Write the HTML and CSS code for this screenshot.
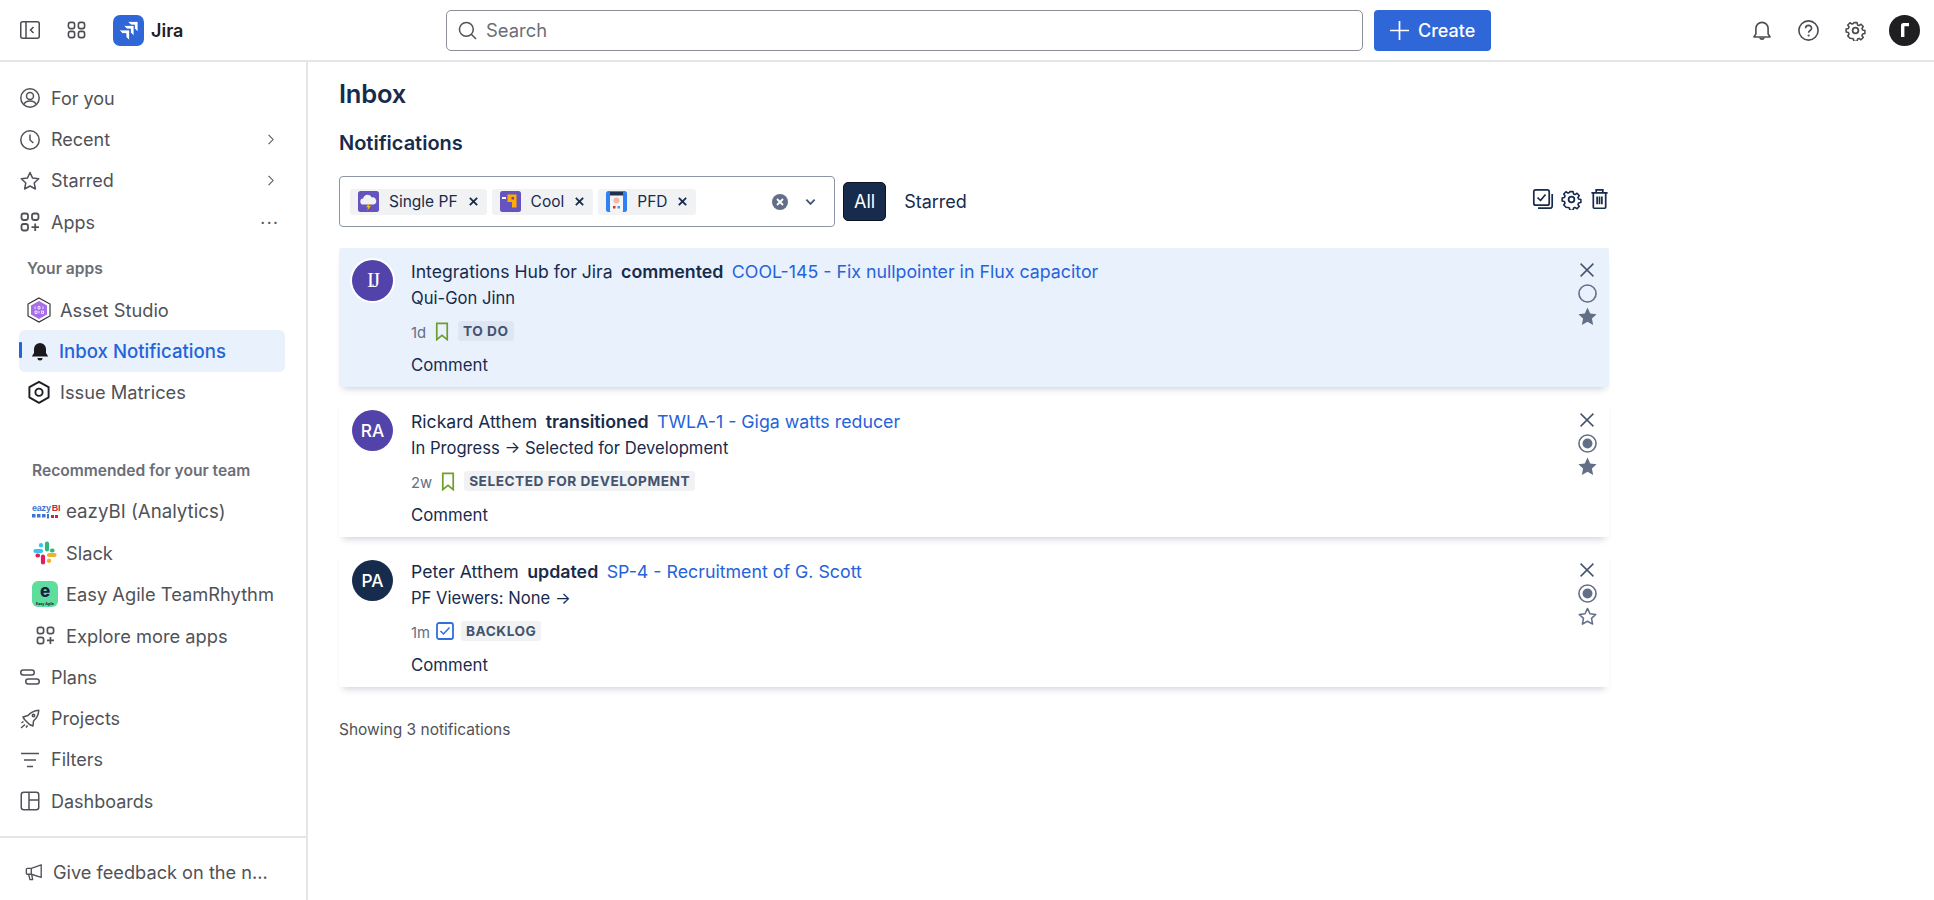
FILE: index.html
```html
<!DOCTYPE html>
<html lang="en">
<head>
<meta charset="utf-8">
<title>Jira Inbox</title>
<link rel="stylesheet" href="styles.css">
</head>
<body>
<svg class="defs" width="0" height="0" aria-hidden="true">
  <defs>
    <symbol id="i-gear" viewBox="0 0 24 24"><path fill="none" stroke="currentColor" stroke-width="2" stroke-linejoin="round" d="M10 2h4l.6 2.9 1.9.8 2.5-1.6 2.8 2.8-1.6 2.5.8 1.9 2.9.6v4l-2.9.6-.8 1.9 1.6 2.5-2.8 2.8-2.5-1.6-1.9.8-.6 2.9h-4l-.6-2.9-1.9-.8L5 21.8 2.2 19l1.6-2.5-.8-1.9L.1 14v-4L3 9.400l.8-1.900L2.200 5 5 2.200l2.500 1.600 1.900-.8z" transform="translate(1.2 1.2) scale(.9)"/><circle cx="12" cy="12" r="3.300" fill="none" stroke="currentColor" stroke-width="2"/></symbol>
    <symbol id="i-apps" viewBox="0 0 20 20"><g fill="none" stroke="currentColor" stroke-width="1.800"><rect x="1.500" y="1.500" width="6.500" height="6.500" rx="2.200"/><rect x="12" y="1.500" width="6.500" height="6.500" rx="2.200"/><rect x="1.500" y="12" width="6.500" height="6.500" rx="2.200"/><path d="M15.200 11.500v7.500M11.500 15.200h7.500"/></g></symbol>
    <symbol id="i-chev" viewBox="0 0 20 20"><path d="M7 3l7 7-7 7" fill="none" stroke="currentColor" stroke-width="1.600"/></symbol>
    <symbol id="i-x" viewBox="0 0 14 14"><path d="M.6.600l12.800 12.800M13.400.600L.600 13.400" fill="none" stroke="currentColor" stroke-width="1.500"/></symbol>
    <symbol id="i-x-bold" viewBox="0 0 12 12"><path d="M2 2l8 8M10 2l-8 8" fill="none" stroke="currentColor" stroke-width="2"/></symbol>
    <symbol id="i-bookmark" viewBox="0 0 14 20"><path d="M1.500 1.500h11v17L7 14l-5.500 4.500z" fill="none" stroke="#6F9E2C" stroke-width="1.800"/></symbol>
    <symbol id="i-star" viewBox="0 0 20 20"><path d="M10 1.500l2.600 5.600 6.100.7-4.500 4.200 1.200 6L10 15l-5.400 3 1.200-6L1.300 7.800l6.100-.7z"/></symbol>
  </defs>
</svg>
<div class="app">
  <header class="topbar">
    <div class="top-left">
      <svg class="icon-toggle" viewBox="0 0 20 18"><g fill="none" stroke="currentColor" stroke-width="1.500"><rect x=".75" y=".75" width="18.500" height="16.500" rx="2"/><path d="M6 1v16"/><path d="M13.500 6l-3 3 3 3"/></g></svg>
      <svg class="icon-grid" viewBox="0 0 20 18"><g fill="none" stroke="currentColor" stroke-width="1.700"><rect x="1.500" y="1" width="6.500" height="6.500" rx="2.200"/><rect x="12" y="1" width="6.500" height="6.500" rx="2.200"/><rect x="1.500" y="10.500" width="6.500" height="6.500" rx="2.200"/><rect x="12" y="10.500" width="6.500" height="6.500" rx="2.200"/></g></svg>
      <div class="logo-tile">
        <svg viewBox="0 0 31 31"><g fill="#fff" stroke="#2F67D8" stroke-width=".8"><path d="M14.500 6.500H25v10.500l-3.500-3.500V10h-3.500z"/><path d="M10.500 10.500H21V21l-3.500-3.500V14h-3.500z"/><path d="M6 15h10.500v10.500L13 22v-3.500H9.500z"/></g></svg>
      </div>
      <span class="product">Jira</span>
    </div>
    <div class="search">
      <svg class="search-icon" viewBox="0 0 20 20"><g fill="none" stroke="currentColor" stroke-width="1.600"><circle cx="8.800" cy="8.800" r="7.300"/><path d="M14 14l5 5"/></g></svg>
      <span>Search</span>
    </div>
    <div class="create">
      <svg class="plus" viewBox="0 0 20 20"><path d="M10 0v20M0 10h20" stroke="#fff" stroke-width="1.800"/></svg>
      <span>Create</span>
    </div>
    <div class="top-right">
      <svg class="ti ti-bell" viewBox="0 0 18 21"><g fill="none" stroke="currentColor" stroke-width="1.600"><path d="M1 17h16l-1.900-3.200V8.500a6.100 6.100 0 0 0-12.200 0v5.300z" stroke-linejoin="round"/><path d="M6.800 17.500a2.300 2.300 0 0 0 4.400 0"/></g></svg>
      <svg class="ti ti-help" viewBox="0 0 21 21"><circle cx="10.500" cy="10.500" r="9.600" fill="none" stroke="currentColor" stroke-width="1.600"/><path d="M7.600 8.200c0-3.800 6-3.800 6 0 0 2.300-3 2.300-3 4.500" fill="none" stroke="currentColor" stroke-width="1.600"/><circle cx="10.600" cy="15.500" r="1.100" fill="currentColor"/></svg>
      <svg class="ti ti-gear"><use href="#i-gear"/></svg>
      <div class="me"><svg viewBox="0 0 31 31"><path d="M12 22V10.500A2.500 2.500 0 0 1 14.500 8H20v3.200h-4.600V22z" fill="#fff"/></svg></div>
    </div>
  </header>
  <div class="body">
    <aside class="sidebar">
      <nav class="nav">
        <div class="row">
          <svg class="ni" viewBox="0 0 20 20"><g fill="none" stroke="currentColor" stroke-width="1.500"><circle cx="10" cy="10" r="9.200"/><circle cx="10" cy="8" r="3.500"/><path d="M3.800 16.500c1-2.500 3.300-3.500 6.200-3.500s5.200 1 6.200 3.500"/></g></svg>
          <span>For you</span>
        </div>
        <div class="row">
          <svg class="ni" viewBox="0 0 20 20"><g fill="none" stroke="currentColor" stroke-width="1.500"><circle cx="10" cy="10" r="9.200"/><path d="M10 4.500V10l3.300 3"/></g></svg>
          <span>Recent</span>
          <svg class="chev"><use href="#i-chev"/></svg>
        </div>
        <div class="row">
          <svg class="ni star-line" viewBox="0 0 20 20"><use href="#i-star"/></svg>
          <span>Starred</span>
          <svg class="chev"><use href="#i-chev"/></svg>
        </div>
        <div class="row">
          <svg class="ni"><use href="#i-apps"/></svg>
          <span>Apps</span>
          <span class="dots">•••</span>
        </div>
        <div class="label label-apps">Your apps</div>
        <div class="row sub">
          <svg class="si" viewBox="0 0 24 26"><path d="M12 1l11 6v12l-11 6-11-6V7z" fill="#fff" stroke="#292A2E" stroke-width="1.100"/><path d="M12 4l8 4.500v9L12 22l-8-4.500v-9z" fill="#A66EE8"/><path d="M8 9.500v2.500M11 9.500h2v2.500h-2zM16 9.500v2.500M8 14h2v2.500H8zM12 14v2.500M14.500 14h2v2.500h-2z" stroke="#fff" stroke-width=".8" fill="none"/></svg>
          <span>Asset Studio</span>
        </div>
        <div class="row sub active">
          <svg class="si bell-solid" viewBox="0 0 20 20"><path d="M1.800 15.500h16.400L16 12V8a6 6 0 0 0-12 0v4zM7.500 17h5a2.500 2.500 0 0 1-5 0z" fill="currentColor"/></svg>
          <span>Inbox Notifications</span>
        </div>
        <div class="row sub">
          <svg class="si" viewBox="0 0 20 20"><path d="M10 1.500l8 4.500v8.500l-8 4.500-8-4.500V6z" fill="none" stroke="#1f2024" stroke-width="1.600" stroke-linejoin="round"/><circle cx="10" cy="10.200" r="3" fill="none" stroke="#1f2024" stroke-width="1.600"/></svg>
          <span>Issue Matrices</span>
        </div>
        <div class="label label-rec">Recommended for your team</div>
        <div class="row rec rec-ez">
          <div class="ez">
            <div class="ez-word"><span class="ez-blue">eazy</span><span class="ez-red">BI</span></div>
            <svg class="ez-dots" viewBox="0 0 26 5"><g fill="#3B77D0"><rect x="0" y="0" width="3.500" height="3.500"/><rect x="5" y="0" width="3.500" height="3.500"/><rect x="10" y="0" width="3.500" height="3.500"/><rect x="15" y="0" width="2" height="4.500"/></g><g fill="#C6283A"><rect x="19" y="1" width="3" height="3"/><rect x="23" y="1" width="3" height="3"/></g></svg>
          </div>
          <span>eazyBI (Analytics)</span>
        </div>
        <div class="row rec">
          <svg class="ri" viewBox="0 0 26 26"><g fill="none" stroke-width="4.200" stroke-linecap="round"><path d="M9 11H3.500M9 5.500V5" stroke="#36C5F0"/><path d="M15 9.500V3.500M20.500 10.500H20" stroke="#2EB67D"/><path d="M17 15h5.500M17 20.500V21" stroke="#ECB22E"/><path d="M11 16.500v6M5.500 15.500H6" stroke="#E01E5A"/></g></svg>
          <span>Slack</span>
        </div>
        <div class="row rec">
          <div class="ea"><span class="ea-e">e</span><span class="ea-t">Easy Agile</span></div>
          <span>Easy Agile TeamRhythm</span>
        </div>
        <div class="row rec rec-more">
          <svg class="ni"><use href="#i-apps"/></svg>
          <span>Explore more apps</span>
        </div>
        <div class="row">
          <svg class="ni" viewBox="0 0 20 20"><g fill="none" stroke="currentColor" stroke-width="1.500"><rect x=".75" y="3" width="13.500" height="5" rx="2.500"/><rect x="5.750" y="12" width="13.500" height="5" rx="2.500"/></g></svg>
          <span>Plans</span>
        </div>
        <div class="row">
          <svg class="ni" viewBox="0 0 20 20"><g fill="none" stroke="currentColor" stroke-width="1.500" stroke-linejoin="round"><path d="M8 6.500C11 3 14.500 1.500 18.800 1.200c-.3 4.300-1.800 7.800-5.300 10.800l-.5 5-3.500-1.500-5-5L3 8z"/><circle cx="13.500" cy="6.500" r="1.200"/><path d="M1 19l4-3.500M1.500 14l2-1.500M6 18.500l1.500-2"/></g></svg>
          <span>Projects</span>
        </div>
        <div class="row">
          <svg class="ni" viewBox="0 0 20 20"><path d="M1 3.500h18M4 10h12M7 16.500h6" stroke="currentColor" stroke-width="1.600" fill="none"/></svg>
          <span>Filters</span>
        </div>
        <div class="row">
          <svg class="ni" viewBox="0 0 20 20"><g fill="none" stroke="currentColor" stroke-width="1.500"><rect x="1.250" y="1.250" width="17.500" height="17.500" rx="2.500"/><path d="M9 1v18M9 9h10"/></g></svg>
          <span>Dashboards</span>
        </div>
      </nav>
      <div class="feedback">
        <svg class="ni" viewBox="0 0 20 20"><g fill="none" stroke="currentColor" stroke-width="1.500" stroke-linejoin="round"><path d="M18 2v14L7 12.500H2.500a1 1 0 0 1-1-1V7a1 1 0 0 1 1-1H7z"/><path d="M7 6v6.500M4 12.500l1.500 6h3l-1-5.500"/></g></svg>
        <span>Give feedback on the n...</span>
      </div>
    </aside>
    <main class="main">
      <h1 class="title">Inbox</h1>
      <h2 class="subtitle">Notifications</h2>
      <div class="filters">
        <div class="select">
          <div class="chip">
            <svg class="ci" viewBox="0 0 21 21"><rect width="21" height="21" rx="2.500" fill="#6554C0"/><path d="M5.500 13.500a3 3 0 0 1-.3-6 4.500 4.500 0 0 1 8.600-1 3.500 3.500 0 0 1 1.700 7z" fill="#F1F2F4"/><path d="M11 12.500l-3 4 2.300-.4-1 3.400 3.700-4.800-2.300.3z" fill="#FFC400"/></svg>
            <span>Single PF</span>
            <svg class="cx"><use href="#i-x-bold"/></svg>
          </div>
          <div class="chip">
            <svg class="ci" viewBox="0 0 21 21"><rect width="21" height="21" rx="2.500" fill="#6554C0"/><path d="M2 6h4v2H2z" fill="#fff"/><path d="M7.500 3.500h9v13h-4.500v-5.500H7.500z" fill="#FFAB00"/><rect x="11.500" y="6" width="2.500" height="2.500" fill="#5E4DB2"/></svg>
            <span>Cool</span>
            <svg class="cx"><use href="#i-x-bold"/></svg>
          </div>
          <div class="chip">
            <svg class="ci" viewBox="0 0 21 21"><rect width="21" height="21" rx="2.500" fill="#2F80F5"/><rect x="4" y="1" width="13" height="20" rx="1" fill="#F4F5F7"/><rect x="4" y="1" width="13" height="3.500" fill="#22304F"/><circle cx="10.500" cy="9.500" r="3" fill="#F5B8A5"/><rect x="7" y="15" width="2.500" height="2.500" fill="#DE350B"/><rect x="11.500" y="15" width="2.500" height="2.500" fill="#4C9AFF"/></svg>
            <span>PFD</span>
            <svg class="cx"><use href="#i-x-bold"/></svg>
          </div>
          <div class="select-tools">
            <svg class="clear" viewBox="0 0 16 16"><circle cx="8" cy="8" r="8" fill="#626F86"/><path d="M5 5l6 6M11 5l-6 6" stroke="#fff" stroke-width="1.800"/></svg>
            <svg class="down" viewBox="0 0 12 8"><path d="M1.500 1.500L6 6l4.500-4.500" fill="none" stroke="#44546F" stroke-width="2"/></svg>
          </div>
        </div>
        <div class="tab tab-on">All</div>
        <div class="tab">Starred</div>
        <div class="tools">
          <svg class="tool" viewBox="0 0 20 20"><g fill="none" stroke="currentColor" stroke-width="1.700" stroke-linejoin="round"><rect x=".8" y=".8" width="15.400" height="15.400" rx="2"/><path d="M4.500 8.500l3 3 5-6"/><path d="M19.200 5v12a2.200 2.200 0 0 1-2.200 2.200H5"/></g></svg>
          <svg class="tool tool-gear"><use href="#i-gear"/></svg>
          <svg class="tool tool-trash" viewBox="0 0 17 21"><g fill="none" stroke="currentColor" stroke-width="1.800"><path d="M0 4h17M5 4V1h7v3"/><path d="M2 4v15.200a1 1 0 0 0 1 1h11a1 1 0 0 0 1-1V4"/><path d="M6 8v8M8.500 8v8M11 8v8"/></g></svg>
        </div>
      </div>
      <div class="list">
        <article class="card card-unread">
          <div class="avatar av-purple av-serif"><span>IJ</span></div>
          <div class="content">
            <p class="line1">Integrations Hub for Jira <b>commented</b> <a>COOL-145 - Fix nullpointer in Flux capacitor</a></p>
            <p class="line2">Qui-Gon Jinn</p>
            <div class="meta"><span class="age">1d</span><svg class="type-b"><use href="#i-bookmark"/></svg><span class="loz">TO DO</span></div>
            <p class="comment">Comment</p>
          </div>
          <div class="actions">
            <svg class="a-x"><use href="#i-x"/></svg>
            <svg class="a-c" viewBox="0 0 20 20"><circle cx="10" cy="10" r="9" fill="none" stroke="currentColor" stroke-width="1.700"/></svg>
            <svg class="a-s" viewBox="0 0 20 20"><use href="#i-star"/></svg>
          </div>
        </article>
        <article class="card">
          <div class="avatar av-purple">RA</div>
          <div class="content">
            <p class="line1">Rickard Atthem <b>transitioned</b> <a>TWLA-1 - Giga watts reducer</a></p>
            <p class="line2">In Progress → Selected for Development</p>
            <div class="meta"><span class="age">2w</span><svg class="type-b"><use href="#i-bookmark"/></svg><span class="loz">SELECTED FOR DEVELOPMENT</span></div>
            <p class="comment">Comment</p>
          </div>
          <div class="actions">
            <svg class="a-x"><use href="#i-x"/></svg>
            <svg class="a-c" viewBox="0 0 20 20"><circle cx="10" cy="10" r="9" fill="none" stroke="currentColor" stroke-width="1.700"/><circle cx="10" cy="10" r="5.200" fill="currentColor"/></svg>
            <svg class="a-s" viewBox="0 0 20 20"><use href="#i-star"/></svg>
          </div>
        </article>
        <article class="card">
          <div class="avatar av-navy">PA</div>
          <div class="content">
            <p class="line1">Peter Atthem <b>updated</b> <a>SP-4 - Recruitment of G. Scott</a></p>
            <p class="line2">PF Viewers: None →</p>
            <div class="meta"><span class="age">1m</span><svg class="type-c" viewBox="0 0 18 18"><rect x="1" y="1" width="16" height="16" rx="2" fill="none" stroke="#2F6FDE" stroke-width="1.800"/><path d="M4.500 9l3 3 6-6.500" fill="none" stroke="#2F6FDE" stroke-width="1.500"/></svg><span class="loz">BACKLOG</span></div>
            <p class="comment">Comment</p>
          </div>
          <div class="actions">
            <svg class="a-x"><use href="#i-x"/></svg>
            <svg class="a-c" viewBox="0 0 20 20"><circle cx="10" cy="10" r="9" fill="none" stroke="currentColor" stroke-width="1.700"/><circle cx="10" cy="10" r="5.200" fill="currentColor"/></svg>
            <svg class="a-s a-s-line" viewBox="0 0 20 20"><use href="#i-star"/></svg>
          </div>
        </article>
      </div>
      <p class="count">Showing 3 notifications</p>
    </main>
  </div>
</div>
</body>
</html>
```
FILE: styles.css
```css
* { box-sizing: border-box; }
html, body { margin: 0; height: 100%; }
body {
  font-family: Inter, "Noto Sans", sans-serif;
  font-size: 17.6px;
  color: #172B4D;
  background: #fff;
  overflow: hidden;
}
.defs { position: absolute; }
svg { display: block; flex: none; overflow: visible; }
p, h1, h2 { margin: 0; }

.app { display: flex; flex-direction: column; height: 100vh; }

.topbar {
  display: flex;
  align-items: center;
  height: 62px;
  flex: none;
  border-bottom: 2px solid #E4E5E7;
}
.top-left { display: flex; align-items: center; width: 446px; padding-left: 20px; color: #4B4D52; }
.icon-toggle { width: 20px; height: 18px; margin-right: 27px; }
.icon-grid { width: 19px; height: 18px; margin-right: 27px; }
.logo-tile { width: 31px; height: 31px; border-radius: 7px; background: #2F67D8; margin-right: 7px; }
.logo-tile svg { width: 31px; height: 31px; }
.product { font-weight: 600; font-size: 18px; color: #1f2024; }

.search {
  display: flex;
  align-items: center;
  gap: 9px;
  width: 917px;
  height: 41px;
  padding-left: 11px;
  border: 1.500px solid #8C8F97;
  border-radius: 5px;
  color: #6B6E76;
  font-size: 18.4px;
}
.search-icon { width: 19px; height: 19px; color: #505258; }
.create {
  display: flex;
  align-items: center;
  gap: 9px;
  width: 117px;
  height: 41px;
  margin-left: 11px;
  padding-left: 16px;
  border-radius: 4px;
  background: #2F67D8;
  color: #fff;
  font-weight: 500;
  font-size: 18px;
}
.plus { width: 19px; height: 19px; }
.top-right { display: flex; align-items: center; margin-left: auto; padding-right: 14px; color: #4B4D52; }
.ti-bell { width: 18px; height: 21px; margin-right: 27px; }
.ti-help { width: 21px; height: 21px; margin-right: 26px; }
.ti-gear { width: 21px; height: 21px; margin-right: 23px; }
.me { width: 31px; height: 31px; border-radius: 50%; background: #1F1F21; }
.me svg { width: 31px; height: 31px; }

.body { display: flex; flex: 1; min-height: 0; }
.sidebar {
  display: flex;
  flex-direction: column;
  width: 308px;
  flex: none;
  border-right: 2px solid #E4E5E7;
  color: #505258;
  font-size: 18px;
}
.nav { flex: 1; padding: 15.500px 21px 0 19px; }
.row {
  display: flex;
  align-items: center;
  height: 41.4px;
  padding-left: 1px;
  position: relative;
}
.ni { width: 20px; height: 20px; margin-right: 11px; }
.star-line { fill: none; stroke: currentColor; stroke-width: 1.500; stroke-linejoin: round; }
.chev { width: 13px; height: 13px; margin-left: auto; margin-right: 8px; }
.dots { margin-left: auto; margin-right: 5px; font-size: 7px; letter-spacing: 2.500px; }
.label { display: flex; align-items: center; height: 41.4px; font-size: 15.6px; font-weight: 600; color: #6B6E76; }
.label-apps { padding-left: 8px; margin-top: 4.500px; }
.label-rec { padding-left: 13px; margin-top: 36.4px; }
.row.sub { padding-left: 8px; font-size: 18.3px; }
.si { width: 24px; height: 26px; margin-right: 9px; }
.active {
  border-radius: 6px;
  background: #E9F1FD;
  color: #2563DA;
  font-weight: 500;
}
.row.sub.active { font-size: 18.6px; }
.active::before {
  content: "";
  position: absolute;
  left: 0;
  top: 12px;
  width: 2.500px;
  height: 16px;
  background: #2563DA;
  border-radius: 1px;
}
.bell-solid { color: #1a1a1c; height: 20px; width: 20px; margin: 0 9px 0 3px; }
.row.rec { padding-left: 13px; font-size: 18.3px; }
.row.rec-ez { font-size: 18.7px; }
.ri { width: 26px; height: 26px; margin-right: 8px; }
.ez { display: flex; flex-direction: column; width: 26px; margin-right: 8px; }
.ez-word { display: flex; font-family: "Liberation Sans", sans-serif; font-size: 9px; font-weight: 700; line-height: 9px; letter-spacing: -.2px; }
.ez-blue { color: #3B77D0; }
.ez-red { color: #C6283A; margin-left: 1px; }
.ez-dots { width: 26px; height: 5px; margin-top: 1px; }
.ea {
  display: flex;
  flex-direction: column;
  align-items: center;
  width: 26px;
  height: 26px;
  margin-right: 8px;
  border-radius: 6px;
  background: #5FDD9D;
  color: #1d1b4d;
}
.ea-e { font-size: 17px; font-weight: 800; line-height: 21px; }
.ea-t { font-size: 3.500px; font-weight: 700; line-height: 4.500px; white-space: nowrap; }
.row.rec-more { padding-left: 17px; }
.rec-more .ni { width: 19px; height: 19px; margin-right: 11px; }

.feedback {
  display: flex;
  align-items: center;
  height: 64px;
  flex: none;
  padding: 5px 0 0 25px;
  border-top: 2px solid #E4E5E7;
  font-size: 18.2px;
}
.feedback .ni { width: 18px; height: 18px; margin-right: 10px; }

.main { flex: 1; padding: 0 0 0 31px; min-width: 0; }
.title { font-size: 25.5px; font-weight: 600; line-height: 30px; margin-top: 17px; color: #172B4D; letter-spacing: -.2px; }
.subtitle { font-size: 20px; font-weight: 600; line-height: 28px; margin-top: 20px; color: #172B4D; }
.filters { display: flex; align-items: center; width: 1270px; margin-top: 19px; height: 51px; }
.select {
  display: flex;
  align-items: center;
  gap: 5px;
  width: 496px;
  height: 51px;
  padding-left: 10px;
  border: 1.500px solid #8C94A6;
  border-radius: 4px;
}
.chip {
  display: flex;
  align-items: center;
  height: 26px;
  padding: 0 8px;
  border-radius: 3px;
  background: #F1F2F4;
  font-size: 15.5px;
  color: #172B4D;
}
.ci { width: 21px; height: 21px; margin-right: 10px; }
.cx { width: 11px; height: 11px; margin-left: 10px; }
.select-tools { display: flex; align-items: center; margin-left: auto; padding-right: 18px; }
.clear { width: 16px; height: 16px; margin-right: 17px; }
.down { width: 11px; height: 8px; }
.tab { display: flex; align-items: center; height: 39px; padding: 0 10px; border-radius: 5px; margin-left: 8px; font-size: 18px; }
.tab-on { background: #172B4D; color: #fff; border: 1.500px solid #0b1326; }
.tools { display: flex; align-items: center; margin-left: auto; color: #172B4D; padding: 0 1px 0 0; margin-top: -5px; }
.tool { width: 20px; height: 20px; margin-right: 8px; }
.tool-gear { width: 21px; height: 21px; margin-right: 9px; }
.tool-trash { width: 17px; height: 20px; margin-right: 0; }

.list { display: flex; flex-direction: column; gap: 11px; width: 1270px; margin-top: 21px; }
.card {
  display: flex;
  height: 139px;
  padding: 12px 12px 0 13px;
  background: #fff;
  border-radius: 2px;
  box-shadow: 0 6px 7px -4px rgba(9, 30, 66, .2);
}
.card-unread { background: #E9F1FD; }
.avatar {
  display: flex;
  align-items: center;
  justify-content: center;
  width: 41px;
  height: 41px;
  flex: none;
  border-radius: 50%;
  color: #fff;
  font-size: 17.3px;
  font-weight: 500;
}
.av-purple { background: #5243AA; }
.av-navy { background: #172B4D; }
.av-serif { font-family: "Liberation Serif", serif; font-size: 21px; font-weight: 400; letter-spacing: -2px; box-shadow: 0 0 0 2px #fff; }
.content { flex: 1; padding-left: 18px; }
.line1 { line-height: 24px; }
.line1 b { font-weight: 600; font-size: 17.8px; margin: 0 3.500px; }
.line1 a { color: #2563DA; font-size: 17.8px; }
.line2 { line-height: 24px; margin-top: 2px; font-size: 16.6px; }
.meta { display: flex; align-items: center; height: 20px; margin-top: 11px; }
.age { font-size: 14.8px; color: #626F86; margin-top: 3px; margin-right: 9px; }
.type-b { width: 14px; height: 19px; margin-right: 9px; }
.type-c { width: 18px; height: 18px; margin-left: -3px; margin-right: 7px; }
.loz {
  display: flex;
  align-items: center;
  height: 20px;
  padding: 0 5px;
  border-radius: 3px;
  background: #F1F2F4;
  color: #44546F;
  font-size: 13.7px;
  font-weight: 700;
  letter-spacing: .5px;
}
.card-unread .loz { background: #DFE6F3; }
.comment { line-height: 24px; margin-top: 12px; font-size: 16.8px; }
.actions { display: flex; flex-direction: column; align-items: center; width: 20px; color: #626F86; padding-top: 3px; }
.a-x { width: 14px; height: 14px; color: #44546F; margin-bottom: 6.500px; }
.a-c { width: 19px; height: 19px; margin-bottom: 3px; }
.a-s { width: 21px; height: 21px; fill: #626F86; }
.a-s-line { width: 19px; height: 19px; margin-top: 1px; fill: none; stroke: #626F86; stroke-width: 1.600; stroke-linejoin: round; }
.count { margin-top: 33px; font-size: 15.5px; color: #505258; line-height: 20px; }
```
